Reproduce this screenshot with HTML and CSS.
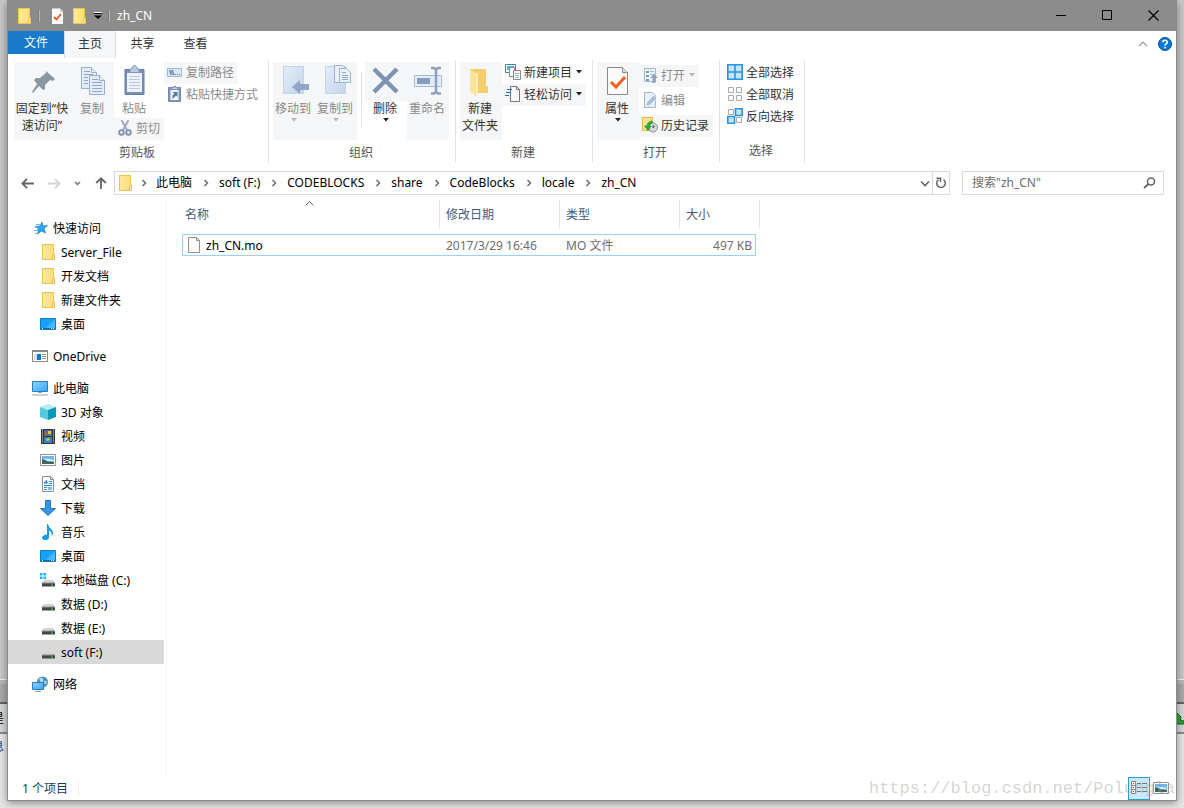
FILE: index.html
```
<!DOCTYPE html>
<html lang="zh-CN">
<head>
<meta charset="utf-8">
<title>zh_CN</title>
<link rel="stylesheet" href="styles.css">
</head>
<body>
<svg class="defs" width="0" height="0" aria-hidden="true">
  <defs>
    <linearGradient id="gf" x2="1"><stop stop-color="#ffe9a0"/><stop offset="1" stop-color="#ffdc78"/></linearGradient>
    <linearGradient id="gs" x2="1" y2="1"><stop stop-color="#8fd3ff"/><stop offset="1" stop-color="#33a5f5"/></linearGradient>
    <linearGradient id="gb" x2="1" y2="1"><stop stop-color="#e4eefa"/><stop offset="1" stop-color="#c3d4ea"/></linearGradient>
  </defs>
  <symbol id="folder" viewBox="0 0 16 16"><path d="M2.500.5h11v9.500h1v5.500h-12z" fill="url(#gf)" stroke="#ecc44f"/><path d="M12.500 15v-4l1-1h1v5.500h-2z" fill="#ffe9a0" stroke="#ecc44f"/></symbol>
  <symbol id="desktop" viewBox="0 0 16 16"><path d="M.5 2.500h15v11H.5z" fill="#18a0fb" stroke="#1478be"/><path d="M6 12 15 3v9z" fill="#45b6ff"/><path d="M1 12.500h14" stroke="#0a6ab0"/><path d="M2 12.500h1m8 0h1m1 0h1" stroke="#fff"/></symbol>
  <symbol id="drive" viewBox="0 0 16 16"><path d="M4 8h9l2 3H1z" fill="#d3d6d8"/><path d="M2 11h13v3.500H2z" fill="#43484b"/><path d="M2 11h13" stroke="#8b8f92"/><path d="M11 13h2" stroke="#3de04a"/></symbol>
  <symbol id="picture" viewBox="0 0 16 16"><path d="M.5 2.500h15v11H.5z" fill="#fff" stroke="#929292"/><path d="M2 4h12v8H2z" fill="#70b5ef"/><path d="M2 7q4-1 12 1v1H2z" fill="#dff1fa"/><path d="M2 7q3 0 6 2.500l6 .5v2H2z" fill="#3d685d"/></symbol>
  <symbol id="page" viewBox="0 0 16 16"><path d="M2.500.5h8l3 3v12h-11z" fill="#fafafa" stroke="#8f8f8f"/><path d="M10.500.5v3h3" fill="none" stroke="#8f8f8f"/></symbol>
  <symbol id="chev" viewBox="0 0 6 8"><path d="m1.500 1 3 3-3 3" fill="none" stroke="#6b6b6b" stroke-width="1.500"/></symbol>
  <symbol id="tri" viewBox="0 0 6 4"><path d="M0 0h6L3 3.500z" fill="currentColor"/></symbol>
</svg>

<div class="backdrop" aria-hidden="true">
  <div class="bd-top"></div><div class="bd-bar"></div>
  <div class="bd-tool"><span>是</span><svg width="8" height="14"><path d="M0 1 5 6l-1 3 4 1v3H0z" fill="#2fa63a" stroke="#0d6b18"/></svg></div>
  <div class="bd-low"><span>息</span></div>
</div>

<div class="window">
  <header class="titlebar">
    <svg class="i16"><use href="#folder"/></svg><span class="bar"></span>
    <svg class="i16 q1" viewBox="0 0 16 16"><path d="M3 .5h8l3 3V16H3z" fill="#fff"/><path d="M11 .5v3h3" fill="#ddd" stroke="#aaa" stroke-width=".5"/><path d="m5 9 2.500 2.500L12 6" fill="none" stroke="#e2581d" stroke-width="1.800"/></svg>
    <svg class="i16 q2"><use href="#folder"/></svg>
    <svg class="q3" width="8" height="7" viewBox="0 0 8 7"><path d="M0 .5h8" stroke="#fff"/><path d="M0 1.500h8" stroke="#000"/><path d="M0 3.500h8L4 7z" fill="#000"/></svg>
    <span class="bar"></span><h1>zh_CN</h1>
    <div class="winbtns">
      <button aria-label="最小化"><svg width="11" height="11"><path d="M0 5.500h10" stroke="#000"/></svg></button>
      <button aria-label="最大化"><svg width="11" height="11"><path d="M.5.5h9v9h-9z" fill="none" stroke="#000"/></svg></button>
      <button aria-label="关闭"><svg width="11" height="11"><path d="m.5.5 10 10m0-10-10 10" stroke="#000" stroke-width="1.200"/></svg></button>
    </div>
  </header>

  <nav class="tabs">
    <button class="file">文件</button><button class="on">主页</button><button>共享</button><button>查看</button>
    <button class="collapse" aria-label="折叠功能区"><svg width="10" height="6"><path d="m1 5 4-4 4 4" fill="none" stroke="#999" stroke-width="1.200"/></svg></button>
    <button class="help" aria-label="帮助"><svg width="14" height="14"><circle cx="7" cy="7" r="6.500" fill="#0b78d8" stroke="#07549b"/><path d="M4.800 5.300Q4.800 3.300 7 3.300t2.200 1.900Q9.200 6.300 8 7 7 7.500 7 8.600M7 9.800v1.700" fill="none" stroke="#fff" stroke-width="1.600"/></svg></button>
  </nav>

  <div class="ribbon">
    <section class="group g1">
      <div class="tools">
        <button class="big wide tint"><svg class="i32" viewBox="0 0 32 32"><path d="m20 6 9 8-2 2-3-1-5 5 0 4-2 1-4-4-6 7-1-1 5-8-3-4 2-2h4l6-5z" fill="#8b979e"/></svg><span>固定到“快<br>速访问”</span></button>
        <button class="big tint off"><svg class="i32" viewBox="0 0 32 32"><g fill="#e3ecf7" stroke="#9aafcd"><path d="M5.500 2.500h10l5 5v16h-15z"/><path d="M13.500 10.500h10l5 5v14h-15z"/><path d="M15.500 2.500v5h5m3 3v5h5" /></g><path d="M8 6.500h6m-6 3h9m-9 3h4m-4 3h4m-4 3h4m4-4h6m-6 3h10m-10 3h10m-10 3h10m-10 3h10" stroke="#8ea6c8"/></svg><span>复制</span></button>
        <div class="pastecol">
          <button class="big short off"><svg class="i32" viewBox="0 0 32 32"><path d="M7 4.500h19v25H7z" fill="#7790b8" stroke="#667fa8"/><path d="M9 8h15v19H9z" fill="#eef3fb"/><path d="M12 7.500V4l2-.5Q14.500.5 16.500.5T19 3.500l2 .5v3.500z" fill="#bccbdf" stroke="#8196b8"/><path d="M11 11.500h11m-11 3h11m-11 3h11m-11 3h11m-11 3h11" stroke="#b9c8dd"/></svg><span>粘贴</span></button>
          <button class="small tint off cut"><svg class="i16" viewBox="0 0 16 16"><path d="m4.500 0 5.500 10M11.500 0 6 10" stroke="#9dacc2" stroke-width="2"/><g fill="none" stroke="#7990b4" stroke-width="1.800"><circle cx="4.500" cy="12.500" r="2.300"/><circle cx="11.500" cy="12.500" r="2.300"/></g></svg><span>剪切</span></button>
        </div>
        <div class="stack">
          <button class="small tint off"><svg class="i16" viewBox="0 0 16 16"><path d="M.5 4.500h14v8H.5z" fill="#dbe6f4" stroke="#a5b7d0"/><path d="m2.500 6 1.500 5m0-5 1.500 5m0-5L7 11M8 10.500h1m1 0h1m1 0h1" stroke="#5d78a3"/></svg><span>复制路径</span></button>
          <button class="small off"><svg class="i16" viewBox="0 0 16 16"><path d="M1.500 1.500h12v14h-12z" fill="#8097bc" stroke="#7189af"/><path d="M3.500 4h8v10h-8z" fill="#f0f5fb"/><path d="M4.500 3.500v-2h2V.5h2v1h2v2z" fill="#c6d2e3" stroke="#7b91b4"/><path d="M5.500 6h5v5L9 9.500 5.500 13V9.500l2-1.700z" fill="#5674a2"/></svg><span>粘贴快捷方式</span></button>
        </div>
      </div>
      <h2>剪贴板</h2>
    </section>

    <section class="group g2">
      <div class="tools">
        <button class="big tint off"><svg class="i32" viewBox="0 0 32 32"><path d="M6.500 1.500h20v27h-20z" fill="url(#gb)" stroke="#c3d3e8"/><path d="M23 15v4h9v6h-9v4l-8-7z" fill="#91a6c6"/></svg><span>移动到</span><svg class="tri"><use href="#tri"/></svg></button>
        <button class="big tint off"><svg class="i32" viewBox="0 0 32 32"><path d="M6.500 1.500h20v27h-20z" fill="url(#gb)" stroke="#c3d3e8"/><g fill="#e8f0fa" stroke="#9db2d0"><path d="M15.500.5h8l4 3v14h-12z"/><path d="M20.500 3.500h7l4 4v10h-11z"/></g><path d="M23 7.500h4m-4 3h6m-6 2h6m-6 2h6" stroke="#8fa7c8"/></svg><span>复制到</span><svg class="tri"><use href="#tri"/></svg></button>
        <span class="rule"></span>
        <button class="big tinttop"><svg class="i32" viewBox="0 0 32 32"><path d="m5 4 23 23M28 4 5 27" stroke="#7e92b4" stroke-width="4.500"/></svg><span>删除</span><svg class="tri"><use href="#tri"/></svg></button>
        <button class="big tint off"><svg class="i32" viewBox="0 0 32 32"><path d="M3.500 10.500h27v11h-27z" fill="#e3edf9" stroke="#a7bbd8"/><path d="M6 13h13v6H6z" fill="#869dc2"/><path d="M20 3h3l2 1.500L27 3h3M20 28.500h3l2-1.500 2 1.500h3M25 4v24" fill="none" stroke="#8b9fbf" stroke-width="2.500"/></svg><span>重命名</span></button>
      </div>
      <h2>组织</h2>
    </section>

    <section class="group g3">
      <div class="tools">
        <button class="big tint"><svg class="i32" viewBox="0 0 32 32"><path d="M6 4h16v17h2v7H11l-5-2z" fill="#f6cd6c"/><path d="m6 4 6 4v23l-6-5z" fill="#ffe394"/><path d="M12 8h2v19l-2 4z" fill="#ffedb7"/></svg><span>新建<br>文件夹</span></button>
        <div class="stack">
          <button class="small"><svg class="i16" viewBox="0 0 16 16"><path d="M.5.500h10v8H.5z" fill="#fff" stroke="#2f8daf"/><path d="M2 2h7v4H2z" fill="#5fb4dd"/><g fill="#fff" stroke="#888"><path d="M4.500 3.500h5v9h-5z"/><path d="M8.500 6.500h7v9h-7z"/></g><path d="M10 9.500h4m-4 2h4m-4 2h4" stroke="#8db7ce"/></svg><span>新建项目</span><svg class="tri"><use href="#tri"/></svg></button>
          <button class="small tint"><svg class="i16" viewBox="0 0 16 16"><path d="M5.500.5h6l3 3v12h-9z" fill="#fafafa" stroke="#777"/><path d="M11.500.5v3h3" fill="none" stroke="#777"/><path d="M2 3.500h5m-6 3h5m-6 3h4" stroke="#1874bd"/></svg><span>轻松访问</span><svg class="tri"><use href="#tri"/></svg></button>
        </div>
      </div>
      <h2>新建</h2>
    </section>

    <section class="group g4">
      <div class="tools">
        <button class="big tint"><svg class="i32" viewBox="0 0 32 32"><path d="M6.500 2.500h15l5 5v22h-20z" fill="#fafafa" stroke="#8b8b8b"/><path d="M21.500 2.500v5h5" fill="#ddd" stroke="#8b8b8b"/><path d="m10 17 5 5 9-10" fill="none" stroke="#f26322" stroke-width="3"/></svg><span>属性</span><svg class="tri"><use href="#tri"/></svg></button>
        <div class="stack gap">
          <button class="small tint off"><svg class="i16" viewBox="0 0 16 16"><path d="M2.500 1.500h11v13h-11z" fill="#edf3fb" stroke="#a2b5d1"/><path d="M4 4h3v2H4zm0 4h3v2H4zm0 4h3v2H4z" fill="#7f99c0"/><path d="M8 4.500h4m-4 3h4" stroke="#a2b5d1"/><path d="m12 7 4 4h-2.500v5h-3v-5H8z" fill="#8da2c3"/></svg><span>打开</span><svg class="tri"><use href="#tri"/></svg></button>
          <button class="small off"><svg class="i16" viewBox="0 0 16 16"><path d="M2.500.5h8l3 3v12h-11z" fill="#e8f0fa" stroke="#a2b5d1"/><path d="m4 14 1-4 7-7 3 3-7 7z" fill="#a9bcd7" stroke="#fff" stroke-width=".5"/></svg><span>编辑</span></button>
          <button class="small tint"><svg class="i16" viewBox="0 0 16 16"><path d="M.5.500h10v13H.5z" fill="#ffe28a" stroke="#dfb947"/><circle cx="11" cy="10.500" r="4.500" fill="#d5d9da" stroke="#8a9193"/><path d="M11 8v3l2-2" fill="none" stroke="#555"/><path d="M10 4Q5 5 5 9H2.500L6 13.500 9 9H7.200Q7 7 10 6z" fill="#25b52b" stroke="#16801b" stroke-width=".6"/></svg><span>历史记录</span></button>
        </div>
      </div>
      <h2>打开</h2>
    </section>

    <section class="group g5">
      <div class="tools">
        <div class="stack">
          <button class="small"><svg class="i16" viewBox="0 0 16 16"><path d="M.8.8h14.400v14.400H.8zM8 1v14M1 8h14" fill="#c4e4fa" stroke="#2d93df" stroke-width="1.600"/></svg><span>全部选择</span></button>
          <button class="small"><svg class="i16" viewBox="0 0 16 16"><path d="M1.500 1.500h5v5h-5zm8 0h5v5h-5zm-8 8h5v5h-5zm8 0h5v5h-5z" fill="#fff" stroke="#aaa"/></svg><span>全部取消</span></button>
          <button class="small"><svg class="i16" viewBox="0 0 16 16"><path d="M1.500 1.500h5v5h-5zm8 8h5v5h-5z" fill="#fff" stroke="#aaa"/><path d="M8.500.800h6.700v6.700H8.500zM.8 8.500h6.700v6.700H.8z" fill="#c4e4fa" stroke="#2d93df" stroke-width="1.600"/></svg><span>反向选择</span></button>
        </div>
      </div>
      <h2>选择</h2>
    </section>
  </div>

  <div class="addressrow">
    <div class="history">
      <button aria-label="后退"><svg width="13" height="11"><path d="M13 5.500H1.500M6 .8 1.300 5.500 6 10.200" fill="none" stroke="#666" stroke-width="1.800"/></svg></button>
      <button aria-label="前进"><svg width="13" height="11"><path d="M0 5.500h11.500M7 .8l4.700 4.700L7 10.200" fill="none" stroke="#d5d5d5" stroke-width="1.800"/></svg></button>
      <button class="recent" aria-label="最近位置"><svg width="7" height="5"><path d="m1 1 2.500 2.500L6 1" fill="none" stroke="#777" stroke-width="1.500"/></svg></button>
      <button aria-label="上移"><svg width="12" height="12"><path d="M6 12V1.500M1.200 6 6 1.300 10.800 6" fill="none" stroke="#666" stroke-width="1.800"/></svg></button>
    </div>
    <div class="crumbs">
      <svg class="i16"><use href="#folder"/></svg>
      <svg class="chev first"><use href="#chev"/></svg><a href="#">此电脑</a>
      <svg class="chev"><use href="#chev"/></svg><a href="#">soft (F:)</a>
      <svg class="chev"><use href="#chev"/></svg><a href="#">CODEBLOCKS</a>
      <svg class="chev"><use href="#chev"/></svg><a href="#">share</a>
      <svg class="chev"><use href="#chev"/></svg><a href="#">CodeBlocks</a>
      <svg class="chev"><use href="#chev"/></svg><a href="#">locale</a>
      <svg class="chev"><use href="#chev"/></svg><a href="#">zh_CN</a>
      <button class="drop" aria-label="展开"><svg width="10" height="7"><path d="m1 1.500 4 4 4-4" fill="none" stroke="#666" stroke-width="1.600"/></svg></button>
      <button class="refresh" aria-label="刷新"><svg width="12" height="12"><path d="M3.500 2.700A4.300 4.300 0 1 0 8.500 2.700M1.500 1.200h4V5" fill="none" stroke="#666" stroke-width="1.500"/></svg></button>
    </div>
    <label class="search"><input type="text" aria-label="搜索" placeholder='搜索"zh_CN"'><svg width="13" height="12"><circle cx="8" cy="4.500" r="3.500" fill="none" stroke="#666" stroke-width="1.600"/><path d="M5.500 7 1 11" stroke="#666" stroke-width="1.800"/></svg></label>
  </div>

  <div class="main">
    <aside class="tree">
      <ul>
        <li><a href="#"><svg class="i16" viewBox="0 0 16 16"><path d="m10 2 1 4 4.500-.5-3.500 3 1.500 4.500-4-2-4 3 1-5-3-2.500L8 6z" fill="#2ba4ef" stroke="#1b7cc0" stroke-width=".7"/><path d="M4 4.500h4m-5 3h3m-4 3h4m-3 3h3" stroke="#5cb8ef"/></svg>快速访问</a>
          <ul>
            <li><a href="#"><svg class="i16"><use href="#folder"/></svg>Server_File</a></li>
            <li><a href="#"><svg class="i16"><use href="#folder"/></svg>开发文档</a></li>
            <li><a href="#"><svg class="i16"><use href="#folder"/></svg>新建文件夹</a></li>
            <li><a href="#"><svg class="i16"><use href="#desktop"/></svg>桌面</a></li>
          </ul></li>
        <li><a href="#"><svg class="i16" viewBox="0 0 16 16"><path d="M.5 2.500h15v11H.5z" fill="#fff" stroke="#888"/><path d="M0 3h16" stroke="#888" stroke-width="2"/><path d="M2 6h3v6H2z" fill="#ddd"/><path d="M5 6h4v6H5z" fill="#0878d4"/><path d="M10 6.500h4m-4 2h4m-4 2h4" stroke="#999"/></svg>OneDrive</a></li>
        <li><a href="#"><svg class="i16" viewBox="0 0 16 16"><path d="M.5 1.500h15v10H.5z" fill="url(#gs)" stroke="#277fb9"/><path d="M6 12.500h4M0 15h16" stroke="#8fa6b5"/></svg>此电脑</a>
          <ul>
            <li><a href="#"><svg class="i16" viewBox="0 0 16 16"><path d="m8 0 8 3-8 3-8-3z" fill="#b5edf2"/><path d="m0 3 8 3v10l-8-3z" fill="#55c9d8"/><path d="m16 3-8 3v10l8-3z" fill="#0799b6"/></svg>3D 对象</a></li>
            <li><a href="#"><svg class="i16" viewBox="0 0 16 16"><path d="M1 1h14v15H1z" fill="#343434"/><path d="M2.500 1.500v14m11-14v14" stroke="#ddd" stroke-dasharray="1 1"/><path d="M4 2h8v6H4z" fill="#4664b8"/><path d="M4 9h8v6H4z" fill="#3284c9"/><circle cx="6" cy="5" r="1.500" fill="#d64c28"/><path d="M8 3h3v3H8zM6 11l3-1 1 2-3 1z" fill="#e5c92d"/><path d="M4 7h8" stroke="#4f9e42"/></svg>视频</a></li>
            <li><a href="#"><svg class="i16"><use href="#picture"/></svg>图片</a></li>
            <li><a href="#"><svg class="i16"><use href="#page"/><path d="m4.500 8 2-4v4M4 6.500h4M9 5.500h3m-3 2h3m-8 2h8m-8 2h3m-3 2h3" fill="none" stroke="#2b8cd0"/><path d="M8 11h4v3H8z" fill="#75bde8"/></svg>文档</a></li>
            <li><a href="#"><svg class="i16" viewBox="0 0 16 16"><path d="M5.500.5h5v8h5L8 15.500.5 8.500h5z" fill="#3594e4" stroke="#2878c0"/></svg>下载</a></li>
            <li><a href="#"><svg class="i16" viewBox="0 0 16 16"><path d="M8 0Q8.500 3 11 5t2 5q-.5 1.500-1.500 2 1-3.500-2.500-5.500v6.500Q9 15.500 6 16 2.500 16 2 14t4-3.500l1 .2V0z" fill="#109af0"/></svg>音乐</a></li>
            <li><a href="#"><svg class="i16"><use href="#desktop"/></svg>桌面</a></li>
            <li><a href="#"><svg class="i16" viewBox="0 0 16 16"><use href="#drive"/><path d="M0 1h2.500v2.500H0zm3.500 0H6v2.500H3.500zM0 4.500h2.500V7H0zm3.500 0H6V7H3.500z" fill="#12b5ee"/></svg>本地磁盘 (C:)</a></li>
            <li><a href="#"><svg class="i16"><use href="#drive"/></svg>数据 (D:)</a></li>
            <li><a href="#"><svg class="i16"><use href="#drive"/></svg>数据 (E:)</a></li>
            <li><a href="#" class="sel"><svg class="i16"><use href="#drive"/></svg>soft (F:)</a></li>
          </ul></li>
        <li><a href="#"><svg class="i16" viewBox="0 0 16 16"><circle cx="10.500" cy="6" r="5.500" fill="#4b8fb8"/><path d="M7 3q3-3 4 0t-2 4M12 5q2-1 3 1l-2 3z" fill="#b1dbea"/><path d="M.5 6.500h11v7H.5z" fill="url(#gs)" stroke="#277fb9"/><path d="M3 15.500h6" stroke="#8fa6b5"/></svg>网络</a></li>
      </ul>
    </aside>
    <div class="files">
      <svg class="sort" width="9" height="5"><path d="m.5 4.500 4-4 4 4" fill="none" stroke="#666"/></svg>
      <table>
        <colgroup><col class="c1"><col class="c2"><col class="c2"><col class="c4"><col class="c5"></colgroup>
        <thead><tr><th>名称</th><th>修改日期</th><th>类型</th><th colspan="2">大小</th></tr></thead>
        <tbody>
          <tr class="space"><td colspan="5"></td></tr>
          <tr class="file-row"><td><span class="fname"><svg class="i16"><use href="#page"/></svg>zh_CN.mo</span></td><td>2017/3/29 16:46</td><td>MO 文件</td><td>497 KB</td></tr>
        </tbody>
      </table>
    </div>
  </div>

  <footer class="status">
    <span class="count">1 个项目</span>
    <div class="views">
      <button class="on" aria-label="详细信息"><svg width="16" height="14"><path d="M.5.500h4v12h-4zM1 4.500h3M1 8.500h3" fill="#fff" stroke="#888"/><path d="M2 2.500h1M2 6.500h1M2 10.500h1" stroke="#b33"/><path d="M6 2.500h4m1 0h5m-10 4h4m1 0h5m-10 4h4m1 0h5" stroke="#777"/></svg></button>
      <button aria-label="大缩略图"><svg width="16" height="16"><use href="#picture"/></svg></button>
    </div>
  </footer>
</div>
<div class="watermark">https://blog.csdn.net/Polungla</div>
</body>
</html>
```
FILE: styles.css
```
* { box-sizing: border-box; }
body { margin: 0; height: 100vh; padding: 0 7px; overflow: hidden; display: flex; background: #e6e6e6; color: #000; font: 12px/17px "Noto Sans", "Noto Sans CJK SC", sans-serif; }
button { border: 0; padding: 0; margin: 0; background: none; font: inherit; color: inherit; display: flex; align-items: center; }
a { color: inherit; text-decoration: none; }
h1, h2 { margin: 0; font: inherit; }
ul { list-style: none; margin: 0; padding: 0; }
svg { display: block; flex: none; }
.defs { position: absolute; }
.i16 { width: 16px; height: 16px; }
.i32 { width: 32px; height: 32px; }
.tri { width: 6px; height: 4px; }

.backdrop { position: absolute; inset: 0; display: flex; flex-direction: column; background: #e6e6e6; z-index: -1; overflow: hidden; }
.bd-top { height: 680px; background: #c8c8c8; border-bottom: 1px solid #f4f4f4; }
.bd-bar { height: 24px; border-top: 4px solid #b8b8b8; border-bottom: 2px solid #666; background: #aaa; }
.bd-tool { height: 30px; display: flex; justify-content: space-between; align-items: center; background: #d5d5d5; border-bottom: 2px solid #888; }
.bd-tool span, .bd-low span { width: 4px; overflow: hidden; direction: rtl; white-space: nowrap; }
.bd-low { display: flex; padding-top: 4px; color: #175078; }

.window { flex: 1; min-width: 0; display: flex; flex-direction: column; margin-bottom: 7px; background: #fff; border: 1px solid #8a8a8a; border-top: 0; box-shadow: 0 2px 8px rgba(0,0,0,.4); }
.titlebar { display: flex; align-items: center; height: 31px; padding-left: 8px; background: #8c8c8c; color: #fff; }
.bar { width: 2px; height: 12px; margin-left: 6px; background: #777; border-right: 1px solid #bbb; }
.q1 { margin-left: 9px; }
.q2 { margin-left: 6px; }
.q3 { margin-left: 7px; }
.titlebar h1 { margin-left: 7px; }
.winbtns { display: flex; margin-left: auto; }
.winbtns button { width: 46px; height: 31px; justify-content: center; }

.tabs { display: flex; height: 27px; }
.tabs button { width: 53px; height: 25px; justify-content: center; color: #333; }
.tabs .file { width: 56px; height: 23px; background: #1979ca; color: #fff; }
.tabs .on { width: 52px; height: 27px; padding-bottom: 2px; background: #f5f6f7; border: 1px solid #dadbdc; border-width: 0 1px; }
.tabs .collapse { width: 22px; margin-left: auto; }
.tabs .help { width: 22px; }

.ribbon { display: flex; padding-top: 2px; color: #333; }
.group { display: flex; flex-direction: column; height: 103px; padding-top: 2px; border-right: 1px solid #e2e3e4; }
.tools { display: flex; height: 80px; padding-left: 4px; align-items: flex-start; }
.group h2 { padding-right: 2px; text-align: center; line-height: 25px; color: #555; }
.g1 { width: 261px; }
.g1 .tools { padding-left: 6px; }
.g2 { width: 187px; }
.g3 { width: 137px; }
.g4 { width: 127px; }
.g5 { width: 85px; }
.big { width: 42px; height: 78px; flex: none; flex-direction: column; padding: 3px 2px 0 0; text-align: center; white-space: nowrap; }
.big span { margin-top: 3px; }
.big .tri { margin: 1px 0 0 2px; }
.wide { width: 58px; }
.short { height: 56px; }
.tint { background: #f5f6f7; }
.tinttop { background: linear-gradient(#f5f6f7 39px, transparent 39px); }
.off { color: #8a8a8a; }
.small { height: 22px; padding: 0 4px 2px 3px; gap: 3px; white-space: nowrap; }
.small .tri { margin-left: 1px; }
.tri { color: #222; }
.off .tri { color: #b5b5b5; }
.stack { display: flex; flex-direction: column; align-items: flex-start; }
.gap { gap: 3px; padding-top: 3px; }
.rule { width: 1px; height: 56px; margin: 10px 3px 0 4px; background: #e0e1e2; }

.addressrow { display: flex; height: 37px; padding: 8px 12px 5px 0; align-items: center; }
.history { display: flex; width: 106px; justify-content: space-between; padding: 0 7px 0 13px; }
.crumbs { display: flex; flex: 1; align-items: center; height: 24px; min-width: 0; border: 1px solid #d9d9d9; padding-left: 2px; }
.crumbs a { padding-bottom: 2px; }
.chev { width: 6px; height: 8px; margin: 0 10px 0 11px; }
.first { margin: 0 9px 0 8px; }
.drop { margin-left: auto; width: 12px; }
.refresh { width: 17px; height: 22px; border-left: 1px solid #d9d9d9; justify-content: center; }
.search { display: flex; align-items: center; width: 202px; height: 24px; margin-left: 12px; padding: 0 7px 0 9px; border: 1px solid #d9d9d9; }
.search input { flex: 1; min-width: 0; border: 0; padding: 0 0 1px; outline: 0; font: inherit; background: none; }
.search input::placeholder { color: #6d6d6d; opacity: 1; }

.main { display: flex; flex: 1; min-height: 0; }
.tree { width: 159px; padding-top: 16px; border-right: 1px solid #f3f3f3; }
.tree > ul { display: flex; flex-direction: column; gap: 8px; padding-right: 2px; }
.tree a { display: flex; align-items: center; gap: 5px; height: 24px; padding-left: 24px; }
.tree ul ul a { padding-left: 32px; }
.tree .sel { background: #d9d9d9; }
.files { flex: 1; padding-left: 15px; position: relative; }
.sort { position: absolute; left: 138px; top: 1px; }
table { width: 578px; table-layout: fixed; border-collapse: separate; border-spacing: 0; }
.c1 { width: 258px; }
.c2 { width: 120px; }
.c4 { width: 76px; }
.c5 { width: 4px; }
th { height: 29px; padding: 0 0 0 6px; font-weight: normal; text-align: left; color: #44597a; border-right: 1px solid #e5e5e5; }
th:first-child { padding-left: 3px; }
td { padding: 0 0 0 6px; color: #6d6d6d; }
.space td { height: 5px; padding: 0; }
.file-row td { height: 22px; border: 1px solid #99d1ff; border-width: 1px 0; }
.file-row td:first-child { border-left-width: 1px; padding-left: 3px; color: #000; }
.file-row td:last-child { border-right-width: 1px; padding-right: 3px; text-align: right; }
.fname { display: flex; align-items: center; gap: 4px; }

.status { display: flex; align-items: center; height: 24px; padding-left: 14px; color: #1e395b; }
.count { padding-right: 10px; border-right: 1px solid #f0f0f0; }
.views { display: flex; margin-left: auto; padding-right: 4px; }
.views button { width: 22px; height: 23px; justify-content: center; }
.views .on { background: #cbe8f6; border: 1px solid #26a0da; }
.watermark { position: absolute; right: 9px; bottom: 8px; color: rgba(160,160,150,.45); font: 17px/22px "Liberation Mono", monospace; }
```
